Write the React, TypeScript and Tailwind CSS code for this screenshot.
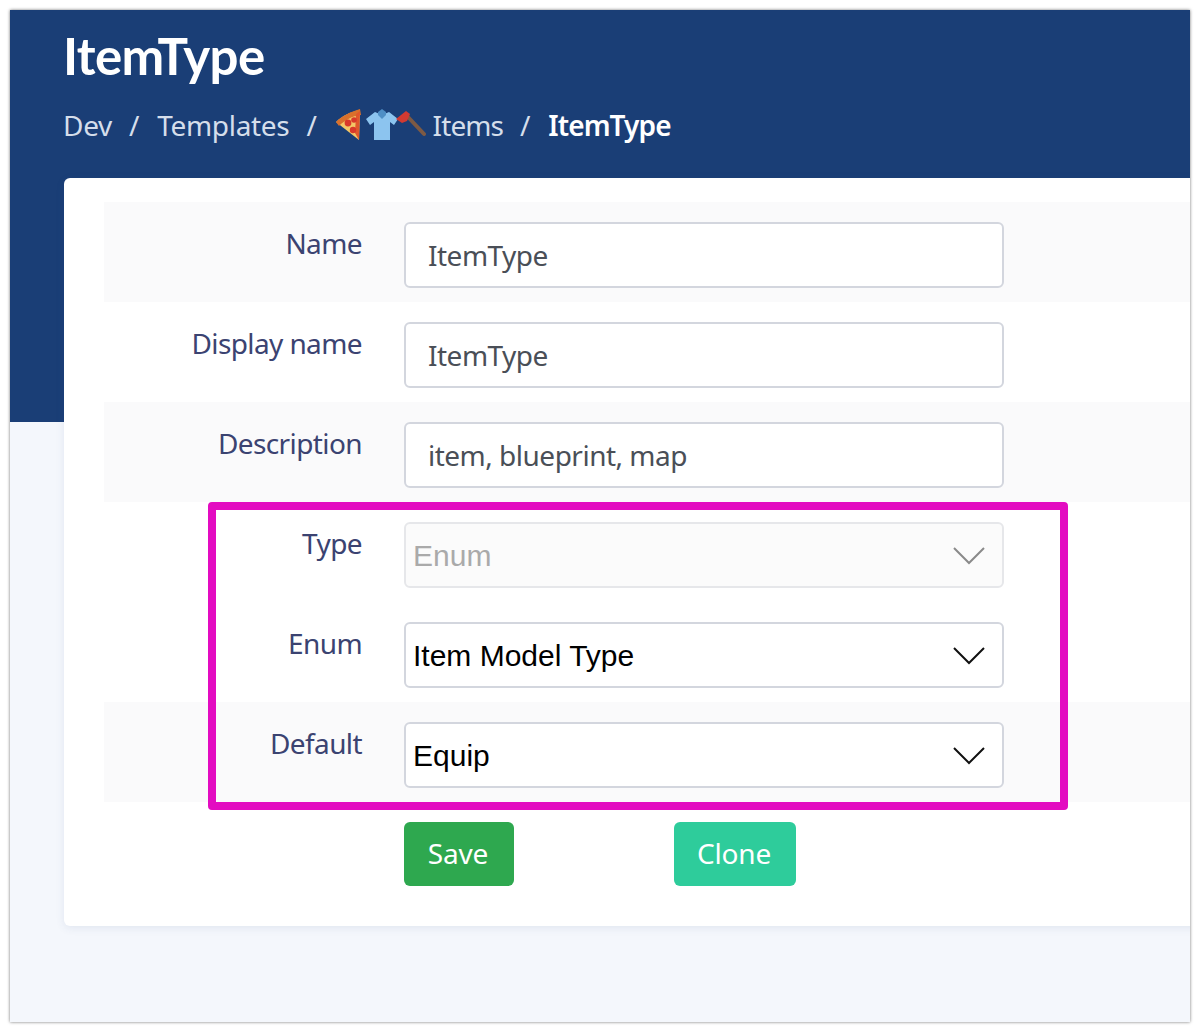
import React from "react";

const Chevron = ({ muted }: { muted?: boolean }) => (
  <svg width="32" height="20" viewBox="0 0 32 20" fill="none" className="absolute right-[17px] top-[22px]">
    <path d="M1 2 L16 17 L31 2" stroke={muted ? "#8a8a8a" : "#111"} strokeWidth="2" />
  </svg>
);

const Emoji = () => (
  <svg width="92" height="32" viewBox="0 0 92 32" className="mr-[7px]">
    {/* pizza */}
    <path d="M2 13 C8 7 16 3 26 1 L25 31 Z" fill="#f3c766" />
    <path d="M2 13 C8 7 16 3 26 0 L27 6 C18 7 11 11 5 17 Z" fill="#d9702c" />
    <path d="M26 2 L25 31 L21 24 L22 5 Z" fill="#e0572c" />
    <circle cx="14" cy="14" r="3.4" fill="#d8392b" />
    <circle cx="19" cy="21" r="3.2" fill="#d8392b" />
    <circle cx="20" cy="11" r="2.8" fill="#d8392b" />
    {/* shirt */}
    <path d="M41 3 L32 10 L36 16 L40 13 L40 31 L56 31 L56 13 L60 16 L64 10 L55 3 L48 6 Z" fill="#8cc4ef" />
    <path d="M44 3 L48 0 L52 3 L52 6 L48 10 L44 6 Z" fill="#4f8fc6" />
    {/* axe */}
    <path d="M74 8 L90 25" stroke="#7d5a44" strokeWidth="4" strokeLinecap="round" />
    <path d="M62 10 L72 2 L76 5 L73 12 L68 14 Z" fill="#d13a32" />
  </svg>
);

const rows = [
  { label: "Name", value: "ItemType", striped: true },
  { label: "Display name", value: "ItemType", striped: false },
  { label: "Description", value: "item, blueprint, map", striped: true },
];

const selects = [
  { label: "Type", value: "Enum", striped: false, disabled: true },
  { label: "Enum", value: "Item Model Type", striped: false, disabled: false },
  { label: "Default", value: "Equip", striped: true, disabled: false },
];

const labelClass =
  "mt-px w-[258px] text-right text-[28px] leading-[40px] text-[#3b4371] font-['Noto_Sans',sans-serif] tracking-[-0.6px]";

export default function App() {
  return (
    <div className="h-[1032px] w-[1200px] bg-white p-[10px] overflow-hidden">
      <div className="relative h-full w-full overflow-hidden bg-[#f4f7fc] shadow-[0_0_3px_rgba(0,0,0,0.55)]">
        <div className="h-[412px] bg-[#1a3e76] pl-[53px] pt-[14px]">
          <h1 className="font-['Lato',sans-serif] text-[51px] leading-[64px] font-bold text-white tracking-[-0.6px]">
            ItemType
          </h1>
          <div className="mt-[17px] flex h-[40px] items-center font-['Noto_Sans',sans-serif] text-[28px] text-[#d5deeb] tracking-[-0.3px]">
            <span>Dev</span>
            <span className="ml-[17px] mr-[18px]">/</span>
            <span>Templates</span>
            <span className="mx-[17px]">/</span>
            <Emoji />
            <span className="tracking-[-0.9px]">Items</span>
            <span className="mx-[17px]">/</span>
            <span className="ml-px font-semibold text-white tracking-[-0.9px]">ItemType</span>
          </div>
        </div>

        <div className="relative -mt-[244px] ml-[54px] h-[748px] w-[1200px] rounded-[6px] bg-white pl-[40px] pt-[24px] shadow-[0_2px_8px_rgba(60,80,140,0.1)]">
          {rows.map((row) => (
            <div key={row.label} className={`flex h-[100px] pt-[20px] ${row.striped ? "bg-[#fafafb]" : "bg-white"}`}>
              <label className={labelClass}>{row.label}</label>
              <div className="ml-[42px] flex h-[66px] w-[600px] items-center rounded-[6px] border-2 border-[#d3d6de] bg-white pl-[22px] font-['Noto_Sans',sans-serif] text-[28px] text-[#4a4f57] tracking-[-0.5px]">
                {row.value}
              </div>
            </div>
          ))}
          {selects.map((row) => (
            <div key={row.label} className={`flex h-[100px] pt-[20px] ${row.striped ? "bg-[#fafafb]" : "bg-white"}`}>
              <label className={labelClass}>{row.label}</label>
              <div
                className={`relative ml-[42px] flex h-[66px] w-[600px] items-center rounded-[6px] border-2 pl-[7px] font-['Liberation_Sans',sans-serif] text-[30px] ${
                  row.disabled ? "border-[#e6e7ea] bg-[#fbfbfb] text-[#aaaaaa]" : "border-[#d3d6de] bg-white text-black"
                }`}
              >
                {row.value}
                <Chevron muted={row.disabled} />
              </div>
            </div>
          ))}
          <div className="ml-[300px] mt-[20px] flex gap-[160px] font-['Noto_Sans',sans-serif] text-[28px] text-white tracking-[-0.2px]">
            <button className="flex h-[64px] w-[110px] items-center justify-center rounded-[6px] bg-[#2ea84f] pb-[2px] pr-[2px]">Save</button>
            <button className="flex h-[64px] w-[122px] items-center justify-center rounded-[6px] bg-[#2ecc9b] pb-[2px] pr-[2px]">Clone</button>
          </div>
        </div>

        <div className="absolute left-[198px] top-[492px] h-[308px] w-[860px] rounded-[4px] border-[8px] border-[#e30cc1]" />
      </div>
    </div>
  );
}
